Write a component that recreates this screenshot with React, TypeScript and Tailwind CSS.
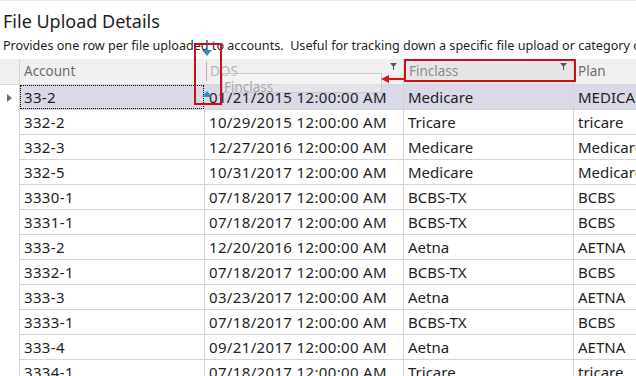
const rows = [
  ["33-2", "01/21/2015 12:00:00 AM", "Medicare", "MEDICARE"],
  ["332-2", "10/29/2015 12:00:00 AM", "Tricare", "tricare"],
  ["332-3", "12/27/2016 12:00:00 AM", "Medicare", "Medicare"],
  ["332-5", "10/31/2017 12:00:00 AM", "Medicare", "Medicare"],
  ["3330-1", "07/18/2017 12:00:00 AM", "BCBS-TX", "BCBS"],
  ["3331-1", "07/18/2017 12:00:00 AM", "BCBS-TX", "BCBS"],
  ["333-2", "12/20/2016 12:00:00 AM", "Aetna", "AETNA"],
  ["3332-1", "07/18/2017 12:00:00 AM", "BCBS-TX", "BCBS"],
  ["333-3", "03/23/2017 12:00:00 AM", "Aetna", "AETNA"],
  ["3333-1", "07/18/2017 12:00:00 AM", "BCBS-TX", "BCBS"],
  ["333-4", "09/21/2017 12:00:00 AM", "Aetna", "AETNA"],
  ["3334-1", "07/18/2017 12:00:00 AM", "Tricare", "tricare"],
];

const Funnel = () => (
  <svg width="7" height="7" viewBox="0 0 7 7" className="block">
    <path d="M0 0h7L4 3.5V7H3V3.5z" fill="#555" />
  </svg>
);

const App = () => {
  return (
    <div className="relative w-[636px] h-[376px] overflow-hidden bg-white text-[#1e1e1e] font-['Segoe_UI','Noto_Sans',sans-serif] border-t border-[#ececec]">
      {/* Title */}
      <div className="h-[37px] pl-[3px] pt-[9px] text-[18px] leading-[22px] whitespace-nowrap">
        File Upload Details
      </div>
      <div className="h-[21px] pl-[3px] text-[12.6px] leading-[16px] whitespace-nowrap">
        Provides one row per file uploaded to accounts.&nbsp; Useful for tracking down a specific file upload or category of upload
      </div>

      {/* Grid */}
      <div className="grid grid-cols-[20px_185px_199px_170px_120px] w-[694px]">
        {/* Header */}
        <div className="h-[26px] bg-[#f0f0f0] border-b border-r border-[#d5d5d5]" />
        <div className="h-[26px] bg-[#f0f0f0] border-b border-[#d5d5d5] flex items-center pl-[4px] text-[13.5px] text-[#6d6d6d]">
          Account
        </div>
        <div className="relative h-[26px] bg-[#f0f0f0] border-b border-r border-[#d5d5d5] flex items-center pl-[5px] text-[13.5px] text-[#b4b4b4]">
          DOS
          <div className="absolute right-[6px] top-[4px]">
            <Funnel />
          </div>
        </div>
        <div className="relative h-[26px] bg-[#e6e6e6] border-b border-r border-[#d5d5d5] flex items-center pl-[5px] text-[13.5px] text-[#8a8a8a]">
          Finclass
          <div className="absolute right-[6px] top-[4px]">
            <Funnel />
          </div>
        </div>
        <div className="h-[26px] bg-[#f0f0f0] border-b border-[#d5d5d5] flex items-center pl-[4px] text-[13.5px] text-[#6d6d6d]">
          Plan
        </div>

        {/* Rows */}
        {rows.map((r, i) => {
          const sel = i === 0;
          const bg = sel ? "bg-[#d9d9e7]" : "bg-white";
          return [
            <div key={`h${i}`} className="h-[25px] border-r border-[#d5d5d5] flex items-center justify-center">
              {sel && (
                <svg width="5" height="8" viewBox="0 0 5 8">
                  <path d="M0 0l5 4-5 4z" fill="#6f6f6f" />
                </svg>
              )}
            </div>,
            <div key={`a${i}`} className={`h-[25px] border-r border-b border-[#d5d5d5] ${bg} relative flex items-center pl-[4px] text-[15px] tracking-[0.35px]`}>
              {sel && <div className="absolute inset-0 border border-dotted border-black" />}
              {r[0]}
            </div>,
            <div key={`d${i}`} className={`h-[25px] border-r border-b border-[#d5d5d5] ${bg} flex items-center pl-[4px] text-[15px] tracking-[0.35px] whitespace-nowrap`}>
              {r[1]}
            </div>,
            <div key={`f${i}`} className={`h-[25px] border-r border-b border-[#d5d5d5] ${bg} flex items-center pl-[4px] text-[15px]`}>
              {r[2]}
            </div>,
            <div key={`p${i}`} className={`h-[25px] border-b border-[#d5d5d5] ${bg} flex items-center pl-[4px] text-[15px]`}>
              {r[3]}
            </div>,
          ];
        })}
      </div>

      {/* Drag ghost of the Finclass header */}
      <div className="absolute left-[222px] top-[72px] w-[160px] h-[20px] border border-[#c8c8c8] bg-white/30 text-[13.5px] text-[#a8a8a8] leading-[16px] pt-[5px] pl-[1px]">
        Finclass
      </div>

      {/* Drop position indicator */}
      <div className="absolute left-[206px] top-[61px] w-px h-[19px] bg-[#b0b0b0]" />
      <svg className="absolute left-[202px] top-[49px]" width="10" height="7" viewBox="0 0 10 7">
        <path d="M0 0h10L5 6z" fill="#2b8fc4" />
      </svg>
      <svg className="absolute left-[202px] top-[89px]" width="10" height="7" viewBox="0 0 10 7">
        <path d="M0 7h10L5 1z" fill="#2b8fc4" />
      </svg>

      {/* Annotations */}
      <div className="absolute left-[194px] top-[42px] w-[28px] h-[62px] border-2 border-[#c8101a]" />
      <div className="absolute left-[404px] top-[58px] w-[172px] h-[23px] border-2 border-[#c8101a]" />
      <svg className="absolute left-[380px] top-[73px]" width="26" height="10" viewBox="0 0 26 10">
        <path d="M26 5H7" stroke="#e0101a" strokeWidth="2" />
        <path d="M1 5l8-4v8z" fill="#e0101a" />
      </svg>
    </div>
  );
};

export default App;
